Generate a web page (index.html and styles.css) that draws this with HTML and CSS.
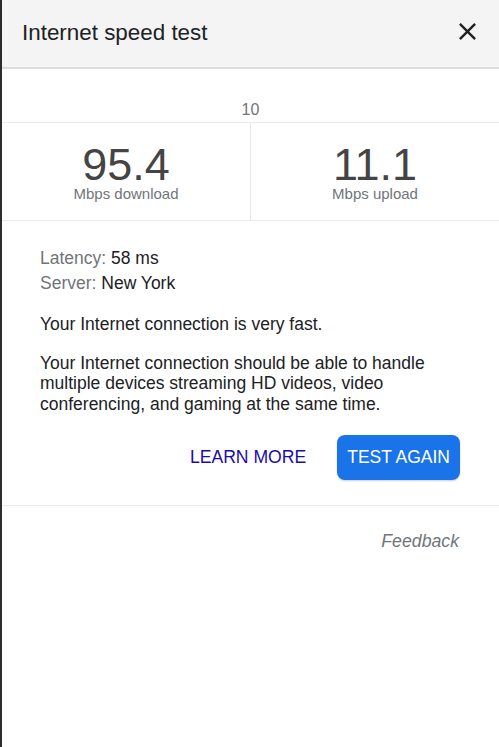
FILE: index.html
```html
<!DOCTYPE html>
<html lang="en">
<head>
	<meta charset="UTF-8" />
	<meta name="viewport" content="width=device-width, initial-scale=1.0" />
	<title>Internet speed test</title>
	<link rel="stylesheet" href="styles.css">
</head>
<body>
	<div class="panel">
		<div class="header">
			<span class="title">Internet speed test</span>
			<svg class="close" width="24" height="24" viewBox="0 0 24 24">
				<path d="M19 6.41L17.59 5 12 10.59 6.41 5 5 6.41 10.59 12 5 17.59 6.41 19 12 13.41 17.59 19 19 17.59 13.41 12z" fill="#202124" />
			</svg>
		</div>
		<div class="scale">10</div>
		<div class="results">
			<div class="result">
				<div class="value">95.4</div>
				<div class="unit">Mbps download</div>
			</div>
			<div class="result">
				<div class="value">11.1</div>
				<div class="unit">Mbps upload</div>
			</div>
		</div>
		<div class="details">
			<div class="meta"><span class="label">Latency:</span> 58 ms</div>
			<div class="meta"><span class="label">Server:</span> New York</div>
			<p class="summary">Your Internet connection is very fast.</p>
			<p class="summary">Your Internet connection should be able to handle multiple devices streaming HD videos, video conferencing, and gaming at the same time.</p>
			<div class="actions">
				<a class="learn" href="#">LEARN MORE</a>
				<button class="again">TEST AGAIN</button>
			</div>
		</div>
		<div class="footer">
			<a class="feedback" href="#">Feedback</a>
		</div>
	</div>
</body>
</html>
```

FILE: styles.css
```css
* {
	padding: 0;
	margin: 0;
	box-sizing: border-box;
}

body {
	background-color: #2d2d2d;
	font-family: Arial, "Liberation Sans", sans-serif;
	color: #202124;
}

.panel {
	margin-left: 2px;
	min-height: 100vh;
	background-color: #fff;
}

/* 头部 */
.header {
	display: flex;
	justify-content: space-between;
	align-items: center;
	height: 69px;
	padding: 0 17px 2px 20px;
	background-color: #f4f4f4;
	border-bottom: 2px solid #dcdcdc;
}

.header .title {
	font-size: 22.4px;
	color: #202124;
}

.header .close {
	width: 29px;
	height: 29px;
	margin-top: -3px;
}

.scale {
	height: 54px;
	padding-top: 32px;
	text-align: center;
	font-size: 16px;
	color: #70757a;
	border-bottom: 1px solid #ebebeb;
}

/* 结果 */
.results {
	display: flex;
	height: 98px;
	border-bottom: 1px solid #ebebeb;
}

.results .result {
	flex: 1;
	text-align: center;
	padding-top: 21px;
}

.results .result + .result {
	border-left: 1px solid #ebebeb;
}

.results .value {
	font-size: 45px;
	line-height: 42px;
	color: #444;
}

.results .unit {
	font-size: 15px;
	line-height: 15px;
	color: #70757a;
}

/* 详情 */
.details {
	padding: 25px 39px 25px 38px;
	font-size: 17.5px;
	border-bottom: 1px solid #ebebeb;
}

.details .meta {
	line-height: 25px;
}

.details .label {
	color: #70757a;
}

.details .summary {
	margin-top: 18px;
	line-height: 20.5px;
}

.actions {
	display: flex;
	justify-content: flex-end;
	align-items: center;
	gap: 31px;
	margin-top: 21px;
}

.actions .learn {
	font-size: 17.6px;
	color: #1a0dab;
	text-decoration: none;
}

.actions .again {
	height: 45px;
	padding: 0 10px;
	border: 0;
	border-radius: 8px;
	font-family: inherit;
	font-size: 17.5px;
	color: #fff;
	background-color: #1a73e8;
	box-shadow: 0 1px 2px rgba(0, 0, 0, .2);
}

.footer {
	padding: 25px 40px 0 0;
	text-align: right;
}

.footer .feedback {
	font-size: 17.7px;
	font-style: italic;
	color: #70757a;
	text-decoration: none;
}
```
